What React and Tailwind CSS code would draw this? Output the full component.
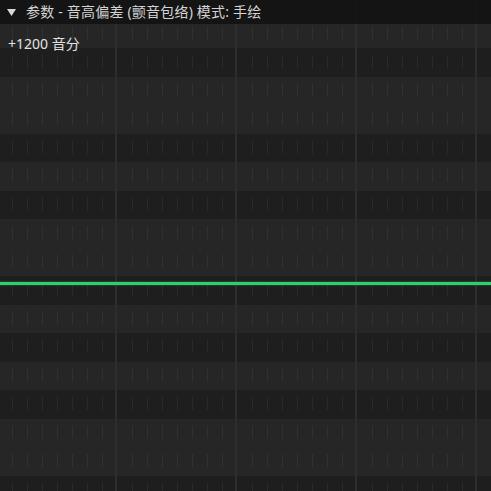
import React from "react";

const ROW_H = 28.5;
const keys = ["d","l","d","l","l","d","l","d","l","l","d","l","d","l","d","l","l","d"];

function Grid() {
  const ticks = [];
  const majors = [];
  for (let x = 12; x < 491; x += 15) ticks.push(x);
  for (let x = 115; x < 491; x += 120) majors.push(x);
  return (
    <svg className="absolute inset-0" width="491" height="491" viewBox="0 0 491 491">
      {keys.map((k, i) =>
        ticks.map((x) => {
          const top = -9 + i * ROW_H;
          if (majors.some((m) => Math.abs(m - x) < 4)) return null;
          return (
            <rect key={i + "-" + x} x={x} y={top + 7} width="1" height="13" fill={k === "d" ? "#2a2a2a" : "#313131"} />
          );
        })
      )}
      {majors.map((m) => (
        <rect key={m} x={m} y="0" width="2" height="491" fill="#2d2d2d" />
      ))}
    </svg>
  );
}

export default function App() {
  return (
    <div className="relative w-[491px] h-[491px] overflow-hidden bg-[#1e1e1e]" style={{ fontFamily: '"Noto Sans", "Noto Sans CJK SC", sans-serif' }}>
      <div className="flex flex-col mt-[-9px]">
        {keys.map((k, i) => (
          <div key={i} className={k === "d" ? "h-[28.5px] shrink-0 bg-[#1e1e1e]" : "h-[28.5px] shrink-0 bg-[#262626]"} />
        ))}
      </div>
      <Grid />
      <div className="absolute left-0 right-0 top-[282px] h-[3px] bg-[#2fce6e] shadow-[0_0_2px_#1f9a50]" />
      <div className="absolute left-0 top-0 w-full h-[24px] bg-[#131313]/90 flex items-center pl-[7px] gap-[10px] text-[14px] text-[#d4d4d4]">
        <svg width="9" height="7" viewBox="0 0 9 7"><path d="M0 0 L9 0 L4.5 7 Z" fill="#d8d8d8" /></svg>
        <span className="leading-none tracking-[0.2px]">参数 - 音高偏差 (颤音包络) 模式: 手绘</span>
      </div>
      <div className="absolute left-[8px] top-[37px] text-[14px] leading-none text-[#e2e2e2]">+1200 音分</div>
    </div>
  );
}
